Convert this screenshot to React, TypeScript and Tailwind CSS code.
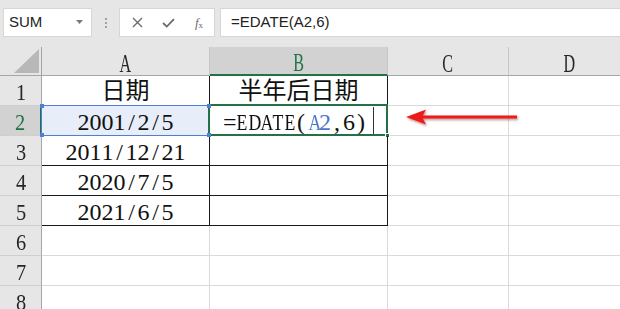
import React from 'react';

const GREEN = '#217346';

function Mono({ text, blue }: { text: string; blue?: [number, number] }) {
  return (
    <span className="inline-flex">
      {text.split('').map((ch, i) => {
        const isLetter = /[A-Z]/.test(ch);
        const isBlue = blue ? i >= blue[0] && i < blue[1] : false;
        return (
          <span
            key={i}
            className={`inline-block w-[12px] text-center ${isLetter ? 'scale-x-[0.74]' : ''} ${isBlue ? 'text-[#4a78d0]' : ''}`}
          >
            {ch}
          </span>
        );
      })}
    </span>
  );
}

function ColHeader({ label, w, selected }: { label: string; w: string; selected?: boolean }) {
  return (
    <div
      className={`${w} shrink-0 h-full flex items-end justify-center border-r ${
        selected
          ? 'bg-[#d2d2d2] border-r-[#c6c6c6] border-b-2 border-b-[#217346] text-[#217346]'
          : 'bg-[#e6e6e6] border-r-[#c6c6c6] border-b border-b-[#a6a6a6] text-[#262626]'
      }`}
    >
      <span className="inline-block text-[26px] leading-[22px] scale-x-[0.62] font-['Liberation_Serif',serif]">
        {label}
      </span>
    </div>
  );
}

function RowHeader({ n, selected }: { n: number; selected?: boolean }) {
  return (
    <div
      className={`w-[42px] shrink-0 h-full flex items-end justify-center border-b border-b-[#cfcfcf] ${
        selected
          ? 'bg-[#d2d2d2] border-r-2 border-r-[#217346] text-[#217346]'
          : 'bg-[#e6e6e6] border-r border-r-[#a6a6a6] text-[#262626]'
      }`}
    >
      <span className="inline-block text-[24px] leading-[24px] scale-x-[0.85] font-['Liberation_Serif',serif] pb-[1px]">
        {n}
      </span>
    </div>
  );
}

const cellText = "text-[24px] leading-[24px] text-[#111] font-['Liberation_Serif','Noto_Sans_CJK_SC',serif]";

export default function App() {
  const dates = ['2001/2/5', '2011/12/21', '2020/7/5', '2021/6/5'];
  return (
    <div className="relative w-[620px] h-[309px] overflow-hidden bg-white select-none">
      {/* formula bar */}
      <div className="h-[47px] bg-[#e6e6e6] flex items-start pt-[8px] pl-[3px]">
        <div className="w-[89px] h-[29px] bg-white border border-[#d6d6d6] flex items-center justify-between pl-[5px] pr-[8px]">
          <span className="text-[15px] text-[#222] font-['Liberation_Sans',Arial,sans-serif]">SUM</span>
          <svg width="7" height="5" viewBox="0 0 7 5">
            <path d="M0 0 L7 0 L3.5 4 Z" fill="#7a7a7a" />
          </svg>
        </div>
        <div className="w-[27px] h-[29px] flex flex-col items-center justify-center gap-[2px]">
          <span className="w-[2px] h-[2px] bg-[#a0a0a0]" />
          <span className="w-[2px] h-[2px] bg-[#a0a0a0]" />
          <span className="w-[2px] h-[2px] bg-[#a0a0a0]" />
        </div>
        <div className="w-[96px] h-[29px] bg-white border border-[#d6d6d6] flex items-center">
          <div className="w-[32px] flex justify-center pl-[2px]">
            <svg width="11" height="11" viewBox="0 0 11 11">
              <path d="M1 1 L10 10 M10 1 L1 10" stroke="#6b6b6b" strokeWidth="1.4" />
            </svg>
          </div>
          <div className="w-[32px] flex justify-center">
            <svg width="13" height="10" viewBox="0 0 13 10">
              <path d="M1 5 L4.8 8.6 L12 1.2" stroke="#6b6b6b" strokeWidth="1.8" fill="none" />
            </svg>
          </div>
          <div className="w-[30px] flex justify-center">
            <span className="italic text-[13px] text-[#6b6b6b] font-['Liberation_Serif',serif] leading-none">
              f<span className="text-[9px] not-italic align-[-1px]">x</span>
            </span>
          </div>
        </div>
        <div className="ml-[5px] flex-1 h-[29px] bg-white border border-[#d6d6d6] border-r-0 flex items-center pl-[10px]">
          <span className="text-[15px] text-[#222] font-['Liberation_Sans',Arial,sans-serif]">=EDATE(A2,6)</span>
        </div>
      </div>

      {/* column headers */}
      <div className="flex h-[29px] w-[630px]">
        <div className="w-[42px] shrink-0 h-full bg-[#e6e6e6] border-r border-r-[#a6a6a6] border-b border-b-[#a6a6a6] flex items-end justify-end pr-[2px] pb-[2px]">
          <svg width="25" height="24" viewBox="0 0 25 24">
            <path d="M25 0 L25 24 L0 24 Z" fill="#b8b8b8" />
          </svg>
        </div>
        <ColHeader label="A" w="w-[168px]" />
        <ColHeader label="B" w="w-[178px]" selected />
        <ColHeader label="C" w="w-[121px]" />
        <ColHeader label="D" w="w-[121px]" />
      </div>

      {/* rows */}
      {[1, 2, 3, 4, 5, 6, 7, 8].map((r) => {
        const inTable = r <= 5;
        const aText = r === 1 ? null : r <= 5 ? dates[r - 2] : null;
        return (
          <div key={r} className="flex h-[30px] w-[630px]">
            <RowHeader n={r} selected={r === 2} />
            {/* A */}
            <div
              className={`relative w-[168px] shrink-0 h-full flex items-end justify-center border-r border-b pb-[1px] ${
                inTable ? 'border-[#1a1a1a]' : 'border-[#dadada]'
              } ${r === 2 ? 'bg-[#e8eef9]' : ''} ${cellText}`}
            >
              {r === 1 && <span className="pb-[1px]">日期</span>}
              {aText && <Mono text={aText} />}
              {r === 2 && (
                <div className="absolute left-[-1px] top-[-1px] right-[-1px] bottom-[-1px] border border-[#4f7fd4] pointer-events-none">
                  <span className="absolute left-[-2px] top-[-2px] w-[4px] h-[4px] bg-[#4f7fd4]" />
                  <span className="absolute right-[-2px] top-[-2px] w-[4px] h-[4px] bg-[#4f7fd4] z-10" />
                  <span className="absolute left-[-2px] bottom-[-2px] w-[4px] h-[4px] bg-[#4f7fd4]" />
                  <span className="absolute right-[-2px] bottom-[-2px] w-[4px] h-[4px] bg-[#4f7fd4] z-10" />
                </div>
              )}
            </div>
            {/* B */}
            <div
              className={`relative w-[178px] shrink-0 h-full flex items-end justify-center border-r border-b pb-[1px] ${
                inTable ? 'border-[#1a1a1a]' : 'border-[#dadada]'
              } ${cellText}`}
            >
              {r === 1 && <span className="pb-[1px]">半年后日期</span>}
              {r === 2 && (
                <>
                  <Mono text="=EDATE(A2,6)" blue={[7, 9]} />
                  <span className="ml-[6px] w-[1px] h-[28px] bg-[#333] self-end mb-[-1px]" />
                  <div className="absolute left-[-2px] top-[-2px] right-[-1px] bottom-[-1px] border-2 border-[#217346] pointer-events-none">
                    <span className="absolute right-[-4px] bottom-[-4px] w-[5px] h-[5px] bg-[#217346] border border-white" />
                  </div>
                </>
              )}
            </div>
            {/* C */}
            <div className="w-[121px] shrink-0 h-full border-r border-b border-[#dadada]" />
            {/* D */}
            <div className="w-[121px] shrink-0 h-full border-r border-b border-[#dadada]" />
          </div>
        );
      })}

      {/* red arrow annotation */}
      <svg className="absolute left-[400px] top-[104px]" width="125" height="28" viewBox="0 0 125 28">
        <defs>
          <filter id="sh" x="-10%" y="-50%" width="120%" height="200%">
            <feDropShadow dx="1" dy="1.5" stdDeviation="1" floodColor="#700" floodOpacity="0.45" />
          </filter>
        </defs>
        <g filter="url(#sh)">
          <path d="M22 11.6 L117 11.6 L117 14.6 L22 14.6 Z" fill="#ec1c1c" />
          <path d="M6 13 L26 5.5 L22 13 L26 20.5 Z" fill="#ec1c1c" />
        </g>
      </svg>
    </div>
  );
}
